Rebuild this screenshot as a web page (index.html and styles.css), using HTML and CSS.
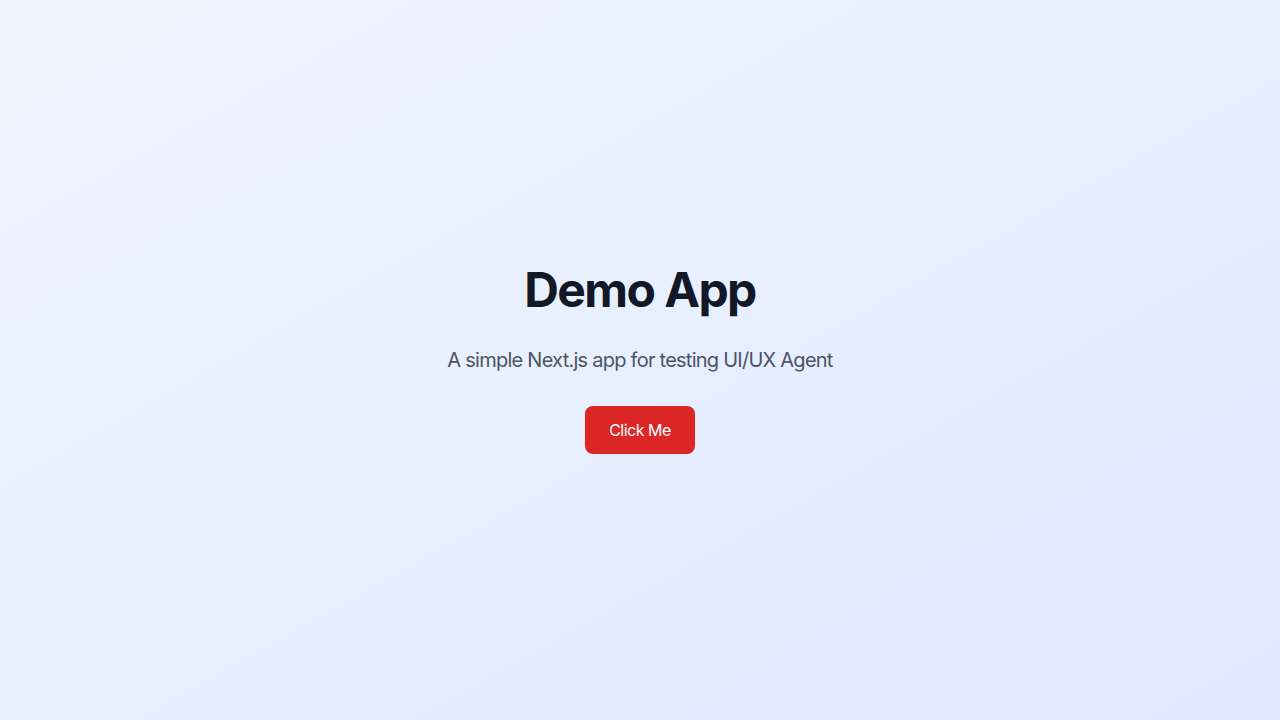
FILE: index.html
```html
<!DOCTYPE html>
<html lang="en">
<head>
<meta charset="utf-8">
<title>Demo App</title>
<link rel="stylesheet" href="styles.css">
</head>
<body>
<main class="page">
  <div class="hero">
    <h1 class="title">Demo App</h1>
    <p class="subtitle">A simple Next.js app for testing UI/UX Agent</p>
    <button class="btn" type="button">Click Me</button>
  </div>
</main>
</body>
</html>
```
FILE: styles.css
```css
* { box-sizing: border-box; }
html, body { margin: 0; padding: 0; }
body {
  font-family: Inter, "Noto Sans", sans-serif;
}
.page {
  min-height: 100vh;
  background: linear-gradient(to bottom right, #eff6ff, #e0e7ff);
  display: flex;
  align-items: center;
  justify-content: center;
}
.hero {
  text-align: center;
  display: flex;
  flex-direction: column;
  align-items: center;
}
.title {
  margin: 0 0 32px;
  font-size: 48px;
  line-height: 1;
  font-weight: 700;
  color: #111827;
  letter-spacing: -1.6px;
}
.subtitle {
  margin: 0 0 32px;
  font-size: 20px;
  line-height: 28px;
  color: #4b5563;
  letter-spacing: -0.75px;
}
.btn {
  font-family: inherit;
  font-size: 16px;
  line-height: 24px;
  padding: 12px 24px;
  border: none;
  border-radius: 8px;
  background: #dc2626;
  color: #ffffff;
  cursor: pointer;
  letter-spacing: -0.5px;
}
```
